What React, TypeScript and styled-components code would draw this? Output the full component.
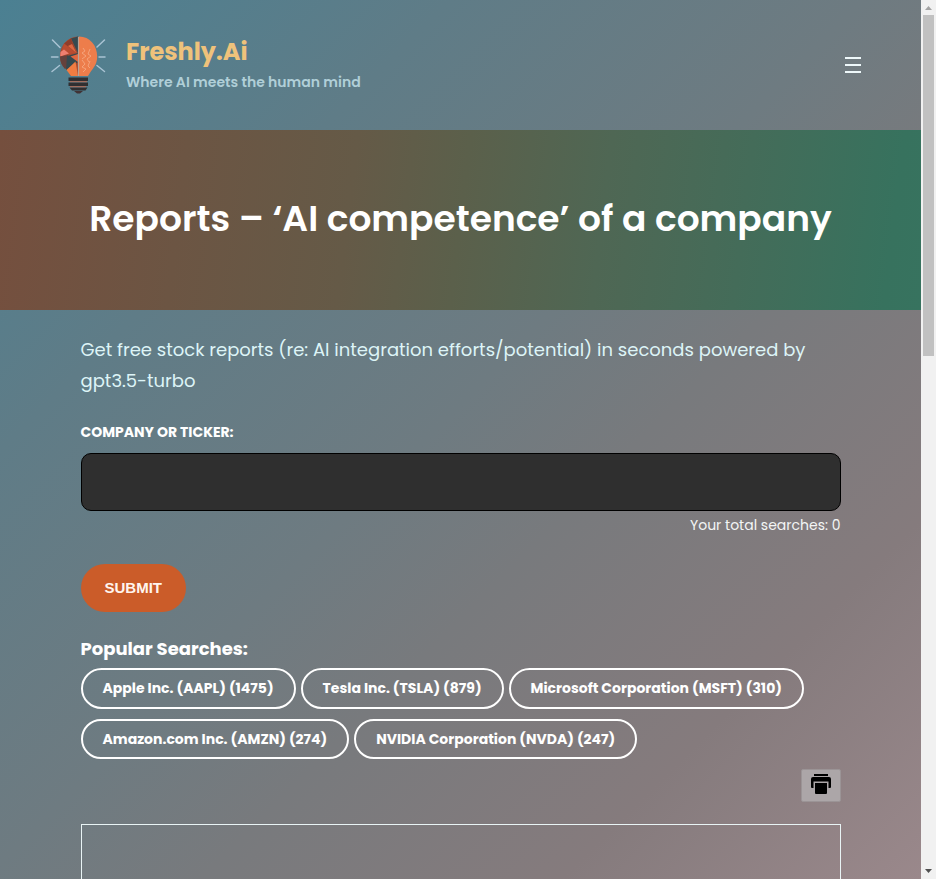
import React from "react";
import styled, { createGlobalStyle } from "styled-components";

const GlobalStyle = createGlobalStyle`
  *, *::before, *::after { box-sizing: border-box; }
  html, body { margin: 0; height: 100%; overflow: hidden; }
  body { font-family: Poppins, Inter, sans-serif; }
`;

const Window = styled.div`
  display: flex;
  width: 936px;
  height: 879px;
  overflow: hidden;
`;

const Page = styled.div`
  width: 921px;
  height: 879px;
  overflow: hidden;
  background: linear-gradient(135deg, #4b8092 0%, #5f7c87 25%, #6e7b81 48%, #787a7d 60%, #857b7d 80%, #9a888b 100%);
`;

const Header = styled.header`
  display: flex;
  align-items: center;
  height: 130px;
  padding: 0 59px 0 50px;
`;

const Brand = styled.div`
  display: flex;
  flex: 1;
  align-items: center;
  gap: 20px;
`;

const BrandText = styled.div`
  display: flex;
  flex-direction: column;
`;

const SiteName = styled.div`
  color: #efc27b;
  font-size: 24px;
  font-weight: 700;
  line-height: 36px;
`;

const Tagline = styled.div`
  color: #b0cfd8;
  font-size: 14px;
  font-weight: 600;
  line-height: 24px;
  margin-bottom: 2px;
`;

const MenuButton = styled.button`
  display: flex;
  padding: 0;
  border: 0;
  background: none;
`;

const Hero = styled.section`
  display: flex;
  align-items: center;
  justify-content: center;
  height: 180px;
  padding-bottom: 3px;
  background: linear-gradient(97deg, #754f3e 0%, #6c5543 20%, #655a47 38%, #5b604b 50%, #4f6754 65%, #446c59 80%, #37725e 96%, #37735f 100%);
`;

const Title = styled.h1`
  margin: 0;
  color: #fff;
  font-size: 36px;
  font-weight: 600;
  line-height: 54px;
  white-space: nowrap;
`;

const Content = styled.main`
  display: flex;
  flex-direction: column;
  width: 760px;
  margin: 0 auto;
  padding-top: 25px;
`;

const Intro = styled.p`
  margin: 0;
  color: #ddf4f7;
  font-size: 18px;
  line-height: 30.6px;
`;

const FieldLabel = styled.label`
  margin-top: 24px;
  color: #fff;
  font-size: 14px;
  font-weight: 700;
  line-height: 24px;
`;

const Field = styled.input`
  width: 760px;
  height: 58px;
  margin-top: 9px;
  padding: 0 18px;
  border: 1px solid #000;
  border-radius: 10px;
  outline: none;
  background: #2f2f2f;
  color: #fff;
`;

const Counter = styled.div`
  align-self: flex-end;
  margin-top: 2px;
  color: #f3f5f5;
  font-size: 14px;
  line-height: 24px;
`;

const Submit = styled.button`
  align-self: flex-start;
  width: 105.5px;
  height: 48px;
  margin-top: 27px;
  padding: 0 0 2px;
  border: 0;
  border-radius: 24px;
  background: #cb5c29;
  color: #fff5ee;
  font: 700 15px "Liberation Sans", Arial, sans-serif;
`;

const Subheading = styled.h2`
  margin: 22px 0 0;
  color: #fff;
  font-size: 18px;
  font-weight: 700;
  line-height: 30px;
`;

const Pills = styled.div`
  display: flex;
  flex-wrap: wrap;
  gap: 10px 5px;
  margin-top: 4px;
`;

const Pill = styled.button`
  height: 40.5px;
  padding: 0 20px;
  border: 2px solid #fff;
  border-radius: 21px;
  background: transparent;
  color: #fff;
  font: 700 14px/24px Poppins, Inter, sans-serif;
  white-space: nowrap;
`;

const PrintButton = styled.button`
  display: flex;
  align-self: flex-end;
  justify-content: center;
  width: 40px;
  height: 33px;
  margin-top: 10px;
  padding: 4px 0 0;
  border: 1px solid #9b9496;
  border-radius: 2px;
  background: #aca6a8;
`;

const Report = styled.div`
  height: 120px;
  margin-top: 22px;
  border: 1px solid #e9f4f5;
`;

const Scrollbar = styled.div`
  display: flex;
  flex-direction: column;
  align-items: center;
  width: 15px;
  height: 879px;
  background: #f1f1f1;
`;

const Thumb = styled.div`
  width: 11px;
  height: 341px;
  background: #c1c1c1;
`;

const ScrollArrow = styled.svg`
  display: block;
  width: 15px;
  height: 15px;
`;

const Spacer = styled.div`
  flex: 1;
`;

const searches = [
  "Apple Inc. (AAPL) (1475)",
  "Tesla Inc. (TSLA) (879)",
  "Microsoft Corporation (MSFT) (310)",
  "Amazon.com Inc. (AMZN) (274)",
  "NVIDIA Corporation (NVDA) (247)",
];

const BulbLogo = () => (
  <svg width="56" height="60" viewBox="0 1 56 60" aria-hidden="true">
    <g stroke="#a9c3d3" strokeWidth="1.5" strokeLinecap="round">
      <path d="M2.500 6 10 13.500M1.500 23H8M2 37.500 9.500 31.500M54.500 6 47 13M55 23H49M54.500 37.500 47 31.500" />
    </g>
    <path d="M28 2.500C17 3 10 12 10 22c0 8 4 11 8 15l3 5h7z" fill="#a8492f" />
    <path d="M21 4.500 28 2.500v17z" fill="#35494f" />
    <path d="M14 9.500 21 4.500l5 13.500z" fill="#8e3d2b" />
    <path d="M14 9.500 26 19 10.500 21z" fill="#b94c31" />
    <path d="M10.500 18 14 15.500l5 4-8.800 3z" fill="#ef7f70" />
    <path d="M18 12 22 10l4.500 9z" fill="#df6740" />
    <path d="M10 22.500 18 21l2 10-5 4c-3-3-5-7-5-12.500z" fill="#65413c" />
    <path d="M17 22 28 19v9L16 36z" fill="#35494f" />
    <path d="M16.500 36 25.500 27.500 28 42h-7z" fill="#f07c42" />
    <path d="M20.500 22.500 28 20v8z" fill="#df6740" />
    <path d="M29 2.500c11 0 18.200 9 18.200 20 0 9-5 12-9.200 19.500H29z" fill="#ed7d4b" />
    <path d="M28.500 3v39" stroke="#b9a398" strokeWidth="1.200" />
    <path d="m33 14 2 3-3 2 4 3-4 3m8-10-2 5 3 2-4 3 2 3m-7-2 3 4-3 3 4 2-3 3m7-11-2 5 2 2" fill="none" stroke="#f8b18e" strokeWidth=".7" />
    <path d="M18.500 43.500H38v3.500H18.500zM18.500 48.500H38V52H18.500zM19.500 53.500H37.500l-2 3H22z" fill="#302f31" />
    <path d="M20 47.700h17M20 52.700h16" stroke="#b66b54" strokeWidth="1" />
    <path d="M24 57h9l-3 2.500h-3z" fill="#413335" />
  </svg>
);

export default function App() {
  return (
    <Window>
      <GlobalStyle />
      <Page>
        <Header>
          <Brand>
            <BulbLogo />
            <BrandText>
              <SiteName>Freshly.Ai</SiteName>
              <Tagline>Where AI meets the human mind</Tagline>
            </BrandText>
          </Brand>
          <MenuButton aria-label="Menu">
            <svg width="18" height="18" viewBox="0 0 18 18" fill="#eef8fa">
              <path d="M1 1h16v2H1zM1 8h16v2H1zM1 15h16v2H1z" />
            </svg>
          </MenuButton>
        </Header>
        <Hero>
          <Title>Reports – ‘AI competence’ of a company</Title>
        </Hero>
        <Content>
          <Intro>
            Get free stock reports (re: AI integration efforts/potential) in seconds powered by gpt3.5-turbo
          </Intro>
          <FieldLabel htmlFor="company">COMPANY OR TICKER:</FieldLabel>
          <Field id="company" />
          <Counter>Your total searches: 0</Counter>
          <Submit>SUBMIT</Submit>
          <Subheading>Popular Searches:</Subheading>
          <Pills>
            {searches.map((name) => (
              <Pill key={name}>{name}</Pill>
            ))}
          </Pills>
          <PrintButton aria-label="Print">
            <svg width="20" height="20" viewBox="0 0 20 20">
              <path d="M3 0h14v2H3zM2 3h16a2 2 0 0 1 2 2v8a1 1 0 0 1-1 1h-1.500V7.500h-15V14H1a1 1 0 0 1-1-1V5a2 2 0 0 1 2-2zM4 9h12v10a1 1 0 0 1-1 1H5a1 1 0 0 1-1-1z" />
            </svg>
          </PrintButton>
          <Report />
        </Content>
      </Page>
      <Scrollbar>
        <ScrollArrow viewBox="0 0 15 15">
          <path d="M4 10 7.500 6 11 10z" fill="#a3a3a3" />
        </ScrollArrow>
        <Thumb />
        <Spacer />
        <ScrollArrow viewBox="0 0 15 15">
          <path d="M4 5 7.500 9 11 5z" fill="#505050" />
        </ScrollArrow>
      </Scrollbar>
    </Window>
  );
}
